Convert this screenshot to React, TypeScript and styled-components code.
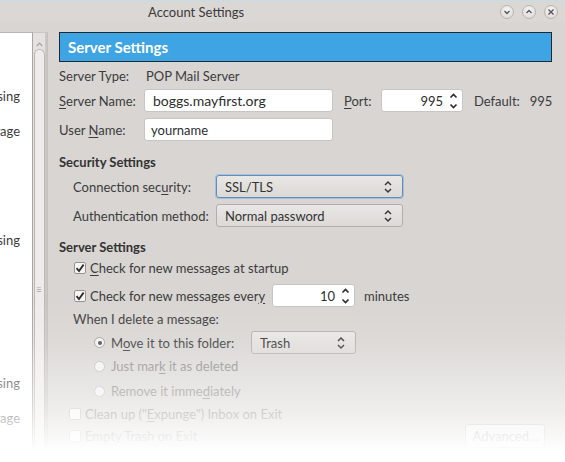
import React from "react";
import styled, { createGlobalStyle } from "styled-components";

const Global = createGlobalStyle`
  html, body {
    margin: 0;
    padding: 0;
    background: #ffffff;
  }
  body {
    font-family: Lato, "Noto Sans", "DejaVu Sans", sans-serif;
    font-size: 13px;
    color: #3c3c3c;
  }
`;

const Window = styled.div`
  position: relative;
  width: 565px;
  height: 462px;
  overflow: hidden;
  background: #d8d5d2;
  display: flex;
  flex-direction: column;
`;

const TitleBar = styled.div`
  height: 22px;
  flex: none;
  display: flex;
  align-items: center;
  border-top: 1px solid #c6dce6;
  box-sizing: border-box;
  background: #dad7d4;
`;

const Title = styled.div`
  margin-left: 148px;
  font-size: 13px;
  color: #3a3a3a;
`;

const Controls = styled.div`
  margin-left: auto;
  margin-right: 7px;
  display: flex;
  gap: 8px;
`;

const WinButton = styled.div`
  width: 14px;
  height: 14px;
  border-radius: 50%;
  box-sizing: border-box;
  border: 1px solid #b8b4b0;
  background: radial-gradient(circle at 50% 35%, #f7f6f5, #d9d6d3);
  display: flex;
  align-items: center;
  justify-content: center;
`;

const Body = styled.div`
  flex: 1;
  display: flex;
  padding-top: 10px;
  min-height: 0;
`;

const Sidebar = styled.div`
  width: 32px;
  flex: none;
  background: #ffffff;
  border-top: 1px solid #b9b6b3;
  border-right: 1px solid #a9a6a3;
  display: flex;
  flex-direction: column;
  overflow: hidden;
`;

const TreeItem = styled.div<{ $mt: number }>`
  margin-top: ${(p) => p.$mt}px;
  height: 18px;
  display: flex;
  justify-content: flex-end;
  align-items: center;
  padding-right: 12px;
  white-space: nowrap;
  color: #3c3c3c;
`;

const Scrollbar = styled.div`
  width: 12px;
  flex: none;
  background: #e4e2e0;
  border-top: 1px solid #c9c6c3;
  display: flex;
  flex-direction: column;
  align-items: center;
`;

const ScrollArrow = styled.div`
  height: 14px;
  display: flex;
  align-items: flex-end;
`;

const Thumb = styled.div`
  margin-top: 2px;
  width: 11px;
  flex: 1;
  box-sizing: border-box;
  border: 1px solid #bcb8b4;
  border-bottom: none;
  border-radius: 6px 6px 0 0;
  background: #eeecea;
  display: flex;
  justify-content: center;
  padding-top: 234px;
  color: #a9a5a1;
  font-size: 10px;
  line-height: 1;
`;

const Splitter = styled.div`
  width: 3px;
  flex: none;
  background: linear-gradient(to right, #cfccc9, #c3bfbb);
`;

const Content = styled.div`
  flex: 1;
  padding-left: 11px;
  padding-right: 17px;
  display: flex;
  flex-direction: column;
`;

const Banner = styled.div`
  height: 30px;
  box-sizing: border-box;
  background: #3ea4e4;
  border: 1px solid #1d2a33;
  display: flex;
  align-items: center;
  padding-left: 8px;
  font-size: 15px;
  font-weight: 700;
  color: #ffffff;
`;

const Row = styled.div<{ $mt: number; $h?: number; $indent?: number }>`
  margin-top: ${(p) => p.$mt}px;
  height: ${(p) => p.$h ?? 18}px;
  padding-left: ${(p) => p.$indent ?? 0}px;
  display: flex;
  align-items: center;
  white-space: nowrap;
`;

const Label = styled.span<{ $w?: number; $dim?: boolean }>`
  width: ${(p) => (p.$w ? `${p.$w}px` : "auto")};
  flex: none;
  color: ${(p) => (p.$dim ? "#85827f" : "#3c3c3c")};
`;

const Heading = styled.div`
  font-weight: 700;
  color: #333333;
`;

const Key = styled.span`
  text-decoration: underline;
  text-underline-offset: 2px;
`;

const TextField = styled.div<{ $w: number; $big?: boolean }>`
  width: ${(p) => p.$w}px;
  height: 23px;
  box-sizing: border-box;
  background: #ffffff;
  border: 1px solid #c8c4c0;
  border-radius: 3px;
  display: flex;
  align-items: center;
  padding-left: ${(p) => (p.$big ? 8 : 6)}px;
  font-size: ${(p) => (p.$big ? 14 : 13)}px;
  color: #2e2e2e;
`;

const SpinField = styled.div<{ $w: number }>`
  width: ${(p) => p.$w}px;
  height: 23px;
  box-sizing: border-box;
  background: #ffffff;
  border: 1px solid #c8c4c0;
  border-radius: 3px;
  display: flex;
  align-items: center;
  justify-content: flex-end;
  gap: 6px;
  padding-right: 4px;
  color: #2e2e2e;
`;

const Select = styled.div<{ $w: number; $focus?: boolean }>`
  width: ${(p) => p.$w}px;
  height: 23px;
  box-sizing: border-box;
  border-radius: 3px;
  border: 1px solid ${(p) => (p.$focus ? "#5b8fc4" : "#b3aea9")};
  box-shadow: ${(p) => (p.$focus ? "0 0 0 1px rgba(120,165,210,0.45)" : "none")};
  background: linear-gradient(#e9e7e5, #dcd9d6);
  display: flex;
  align-items: center;
  justify-content: space-between;
  padding: 0 10px 0 8px;
  color: #333333;
`;

const Box = styled.div<{ $dim?: boolean }>`
  width: 12px;
  height: 12px;
  flex: none;
  box-sizing: border-box;
  border: 1px solid ${(p) => (p.$dim ? "#b9b6b3" : "#97938f")};
  border-radius: 2px;
  background: #f6f5f4;
  display: flex;
  align-items: center;
  justify-content: center;
  margin-right: 4px;
`;

const Radio = styled.div<{ $on?: boolean; $dim?: boolean }>`
  width: 11px;
  height: 11px;
  flex: none;
  box-sizing: border-box;
  border-radius: 50%;
  border: 1px solid ${(p) => (p.$dim ? "#bdbab7" : "#a29e9a")};
  background: #f2f1f0;
  display: flex;
  align-items: center;
  justify-content: center;
  margin-right: 6px;

  &::after {
    content: "";
    width: 4px;
    height: 4px;
    border-radius: 50%;
    background: #4a4a4a;
    display: ${(p) => (p.$on ? "block" : "none")};
  }
`;

const Button = styled.div`
  margin-left: auto;
  margin-right: 7px;
  width: 80px;
  height: 24px;
  box-sizing: border-box;
  border: 1px solid #b5b2af;
  border-radius: 3px;
  background: #ecebea;
  display: flex;
  align-items: center;
  justify-content: center;
  color: #8d8a87;
`;

/* the lower part of the dialog washes out to white */
const Fade = styled.div`
  position: absolute;
  left: 0;
  right: 0;
  top: 300px;
  bottom: 0;
  pointer-events: none;
  background: linear-gradient(
    to bottom,
    rgba(255, 255, 255, 0) 0%,
    rgba(255, 255, 255, 0.12) 26%,
    rgba(255, 255, 255, 0.3) 41%,
    rgba(255, 255, 255, 0.45) 56%,
    rgba(255, 255, 255, 0.62) 70%,
    rgba(255, 255, 255, 0.86) 85%,
    #ffffff 94%
  );
`;

const Chevrons = () => (
  <svg width="8" height="14" viewBox="0 0 8 14">
    <path d="M1 5 L4 2 L7 5 M1 9 L4 12 L7 9" fill="none" stroke="#3a3a3a" strokeWidth="1.5" />
  </svg>
);

const SpinArrows = () => (
  <svg width="9" height="18" viewBox="0 0 9 18">
    <path d="M1.5 5.5 L4.5 2.5 L7.5 5.5 M1.5 12.5 L4.5 15.5 L7.5 12.5" fill="none" stroke="#2a2a2a" strokeWidth="1.6" />
  </svg>
);

const Check = () => (
  <svg width="10" height="10" viewBox="0 0 10 10">
    <path d="M1.5 5.2 L4 8 L8.6 1.6" fill="none" stroke="#2b2b2b" strokeWidth="1.8" />
  </svg>
);

const Glyph = ({ d }: { d: string }) => (
  <svg width="8" height="8" viewBox="0 0 8 8">
    <path d={d} fill="none" stroke="#555" strokeWidth="1.4" />
  </svg>
);

export default function App() {
  return (
    <>
      <Global />
      <Window>
        <TitleBar>
          <Title>Account Settings</Title>
          <Controls>
            <WinButton>
              <Glyph d="M1.5 3 L4 5.5 L6.5 3" />
            </WinButton>
            <WinButton>
              <Glyph d="M1.5 5 L4 2.5 L6.5 5" />
            </WinButton>
            <WinButton>
              <Glyph d="M1.5 1.5 L6.5 6.5 M6.5 1.5 L1.5 6.5" />
            </WinButton>
          </Controls>
        </TitleBar>

        <Body>
          <Sidebar>
            <TreeItem $mt={54}>Composition &amp; Addressing</TreeItem>
            <TreeItem $mt={17}>Synchronization &amp; Storage</TreeItem>
            <TreeItem $mt={91}>Composition &amp; Addressing</TreeItem>
            <TreeItem $mt={125}>Composition &amp; Addressing</TreeItem>
            <TreeItem $mt={17}>Synchronization &amp; Storage</TreeItem>
          </Sidebar>
          <Scrollbar>
            <ScrollArrow>
              <svg width="7" height="5" viewBox="0 0 7 5">
                <path d="M0.8 4 L3.5 1.2 L6.2 4" fill="none" stroke="#a5a29f" strokeWidth="1.2" />
              </svg>
            </ScrollArrow>
            <Thumb>≡</Thumb>
          </Scrollbar>
          <Splitter />

          <Content>
            <Banner>Server Settings</Banner>

            <Row $mt={5}>
              <Label $w={87}>Server Type:</Label>
              <Label>POP Mail Server</Label>
            </Row>
            <Row $mt={3} $h={25}>
              <Label $w={85}>
                <Key>S</Key>erver Name:
              </Label>
              <TextField $w={189} $big>
                boggs.mayfirst.org
              </TextField>
              <Label $w={37} style={{ marginLeft: 11 }}>
                <Key>P</Key>ort:
              </Label>
              <SpinField $w={82}>
                995
                <SpinArrows />
              </SpinField>
              <Label style={{ marginLeft: 11 }}>Default:&nbsp;&nbsp;&nbsp;995</Label>
            </Row>
            <Row $mt={4} $h={25}>
              <Label $w={85}>
                User <Key>N</Key>ame:
              </Label>
              <TextField $w={189}>yourname</TextField>
            </Row>

            <Row $mt={11}>
              <Heading>Security Settings</Heading>
            </Row>
            <Row $mt={3} $h={25} $indent={14}>
              <Label $w={143}>
                Connection sec<Key>u</Key>rity:
              </Label>
              <Select $w={187} $focus>
                SSL/TLS
                <Chevrons />
              </Select>
            </Row>
            <Row $mt={4} $h={25} $indent={14}>
              <Label $w={143}>
                Authent<Key>i</Key>cation method:
              </Label>
              <Select $w={187}>
                Normal password
                <Chevrons />
              </Select>
            </Row>

            <Row $mt={10}>
              <Heading>Server Settings</Heading>
            </Row>
            <Row $mt={3} $indent={15}>
              <Box>
                <Check />
              </Box>
              <Label>
                <Key>C</Key>heck for new messages at startup
              </Label>
            </Row>
            <Row $mt={6} $h={25} $indent={15}>
              <Box>
                <Check />
              </Box>
              <Label $w={182}>
                Check for new messages ever<Key>y</Key>
              </Label>
              <SpinField $w={83}>
                10
                <SpinArrows />
              </SpinField>
              <Label style={{ marginLeft: 9 }}>minutes</Label>
            </Row>
            <Row $mt={2} $indent={14}>
              <Label>When I delete a message:</Label>
            </Row>
            <Row $mt={2} $h={25} $indent={35}>
              <Radio $on />
              <Label $w={140}>
                M<Key>o</Key>ve it to this folder:
              </Label>
              <Select $w={105}>
                Trash
                <Chevrons />
              </Select>
            </Row>
            <Row $mt={2} $indent={35}>
              <Radio $dim />
              <Label $dim>
                Just mar<Key>k</Key> it as deleted
              </Label>
            </Row>
            <Row $mt={7} $indent={35}>
              <Radio $dim />
              <Label $dim>
                Remove it imme<Key>d</Key>iately
              </Label>
            </Row>
            <Row $mt={5} $indent={10}>
              <Box $dim />
              <Label $dim>
                Clean up ("<Key>E</Key>xpunge") Inbox on Exit
              </Label>
            </Row>
            <Row $mt={0} $h={25} $indent={10}>
              <Box $dim />
              <Label $dim>Empty Trash on Exit</Label>
              <Button>Advanced...</Button>
            </Row>
          </Content>
        </Body>
        <Fade />
      </Window>
    </>
  );
}
